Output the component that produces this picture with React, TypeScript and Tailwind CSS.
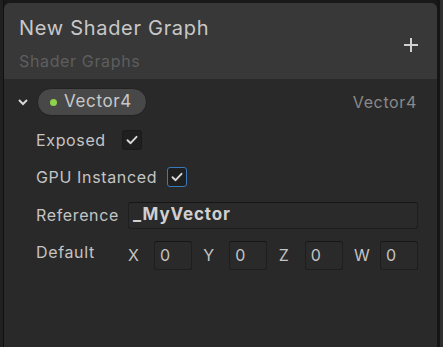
import React from "react";

const font = { fontFamily: "Inter, 'Noto Sans', sans-serif" };

function Check({ focused }: { focused?: boolean }) {
  return (
    <div
      className={`flex h-[20px] w-[20px] items-center justify-center rounded-[3px] border bg-[#1f1f1f] ${
        focused ? "border-[#3a79bb]" : "border-[#1a1a1a]"
      }`}
    >
      <svg width="14" height="14" viewBox="0 0 14 14">
        <path d="M2.5 7.2 L5.6 10.2 L11.5 3.8" fill="none" stroke="#d8d8d8" strokeWidth="1.9" strokeLinecap="round" strokeLinejoin="round" />
      </svg>
    </div>
  );
}

function NumField({ label }: { label: string }) {
  return (
    <div className="flex items-center">
      <span className="w-[26px] text-[16px] text-[#c4c4c4]">{label}</span>
      <div className="flex h-[29px] w-[38px] items-center rounded-[3px] border border-[#1e1e1e] border-t-[#161616] bg-[#2a2a2a] pl-[5px] text-[16px] text-[#c4c4c4]">
        0
      </div>
    </div>
  );
}

export default function App() {
  return (
    <div className="h-[347px] w-[443px] overflow-hidden bg-[#191919] tracking-[0.04em]" style={font}>
      <div className="flex h-full">
        <div className="w-[3px] bg-[#202020]" />
        <div className="w-[1px] bg-[#111111]" />
        <div className="flex w-[433px] flex-col pt-[3px]">
          <div className="flex h-full flex-col overflow-hidden rounded-t-[6px] bg-[#292929]">
            <div className="flex h-[76px] items-start justify-between bg-[#383838] pl-[15px] pr-[19px]">
              <div className="flex flex-col">
                <span className="mt-[12px] text-[20px] leading-[26px] tracking-[0.035em] text-[#c8c8c8]">New Shader Graph</span>
                <span className="mt-[9px] text-[16px] leading-[22px] text-[#5e5e5e]">Shader Graphs</span>
              </div>
              <svg className="mt-[35px]" width="14" height="14" viewBox="0 0 14 14">
                <path d="M7 0 V14 M0 7 H14" stroke="#d0d0d0" strokeWidth="2" />
              </svg>
            </div>
            <div className="flex flex-col pl-[12px] pr-[19px] pt-[8px]">
              <div className="flex h-[30px] items-center justify-between">
                <div className="flex items-center">
                  <svg width="12" height="12" viewBox="0 0 12 12" className="ml-[1px]">
                    <path d="M2 4 L6 8 L10 4" fill="none" stroke="#d8d8d8" strokeWidth="2" />
                  </svg>
                  <div className="ml-[8px] flex h-[28px] w-[110px] items-center rounded-full border border-[#222222] bg-[#484848] pl-[12px]">
                    <span className="h-[7px] w-[7px] rounded-full bg-[#8ed34b]" />
                    <span className="ml-[7px] text-[17px] text-[#c8c8c8]">Vector4</span>
                  </div>
                </div>
                <span className="mr-[1px] text-[16px] text-[#8a8a8a]">Vector4</span>
              </div>
              <div className="flex flex-col pl-[20px]">
                <div className="mt-[9px] flex h-[28px] items-center">
                  <span className="w-[86px] text-[16px] text-[#c4c4c4]">Exposed</span>
                  <Check />
                </div>
                <div className="mt-[9px] flex h-[28px] items-center">
                  <span className="w-[131px] text-[16px] text-[#c4c4c4]">GPU Instanced</span>
                  <Check focused />
                </div>
                <div className="mt-[10px] flex h-[28px] items-center">
                  <span className="w-[92px] text-[16px] text-[#c4c4c4]">Reference</span>
                  <div className="flex h-[27px] flex-1 items-center rounded-[3px] border border-[#1e1e1e] border-t-[#161616] bg-[#2a2a2a] pl-[4px] text-[17px] font-bold tracking-[0.05em] text-[#d0d0d0]">
                    _MyVector
                  </div>
                </div>
                <div className="mt-[11px] flex h-[30px] items-center">
                  <span className="w-[92px] self-start text-[16px] text-[#c4c4c4]">Default</span>
                  <div className="flex flex-1 justify-between">
                    <NumField label="X" />
                    <NumField label="Y" />
                    <NumField label="Z" />
                    <NumField label="W" />
                  </div>
                </div>
              </div>
            </div>
          </div>
        </div>
        <div className="w-[3px] bg-[#151515]" />
        <div className="w-[3px] bg-[#2e2e2e]" />
      </div>
    </div>
  );
}
